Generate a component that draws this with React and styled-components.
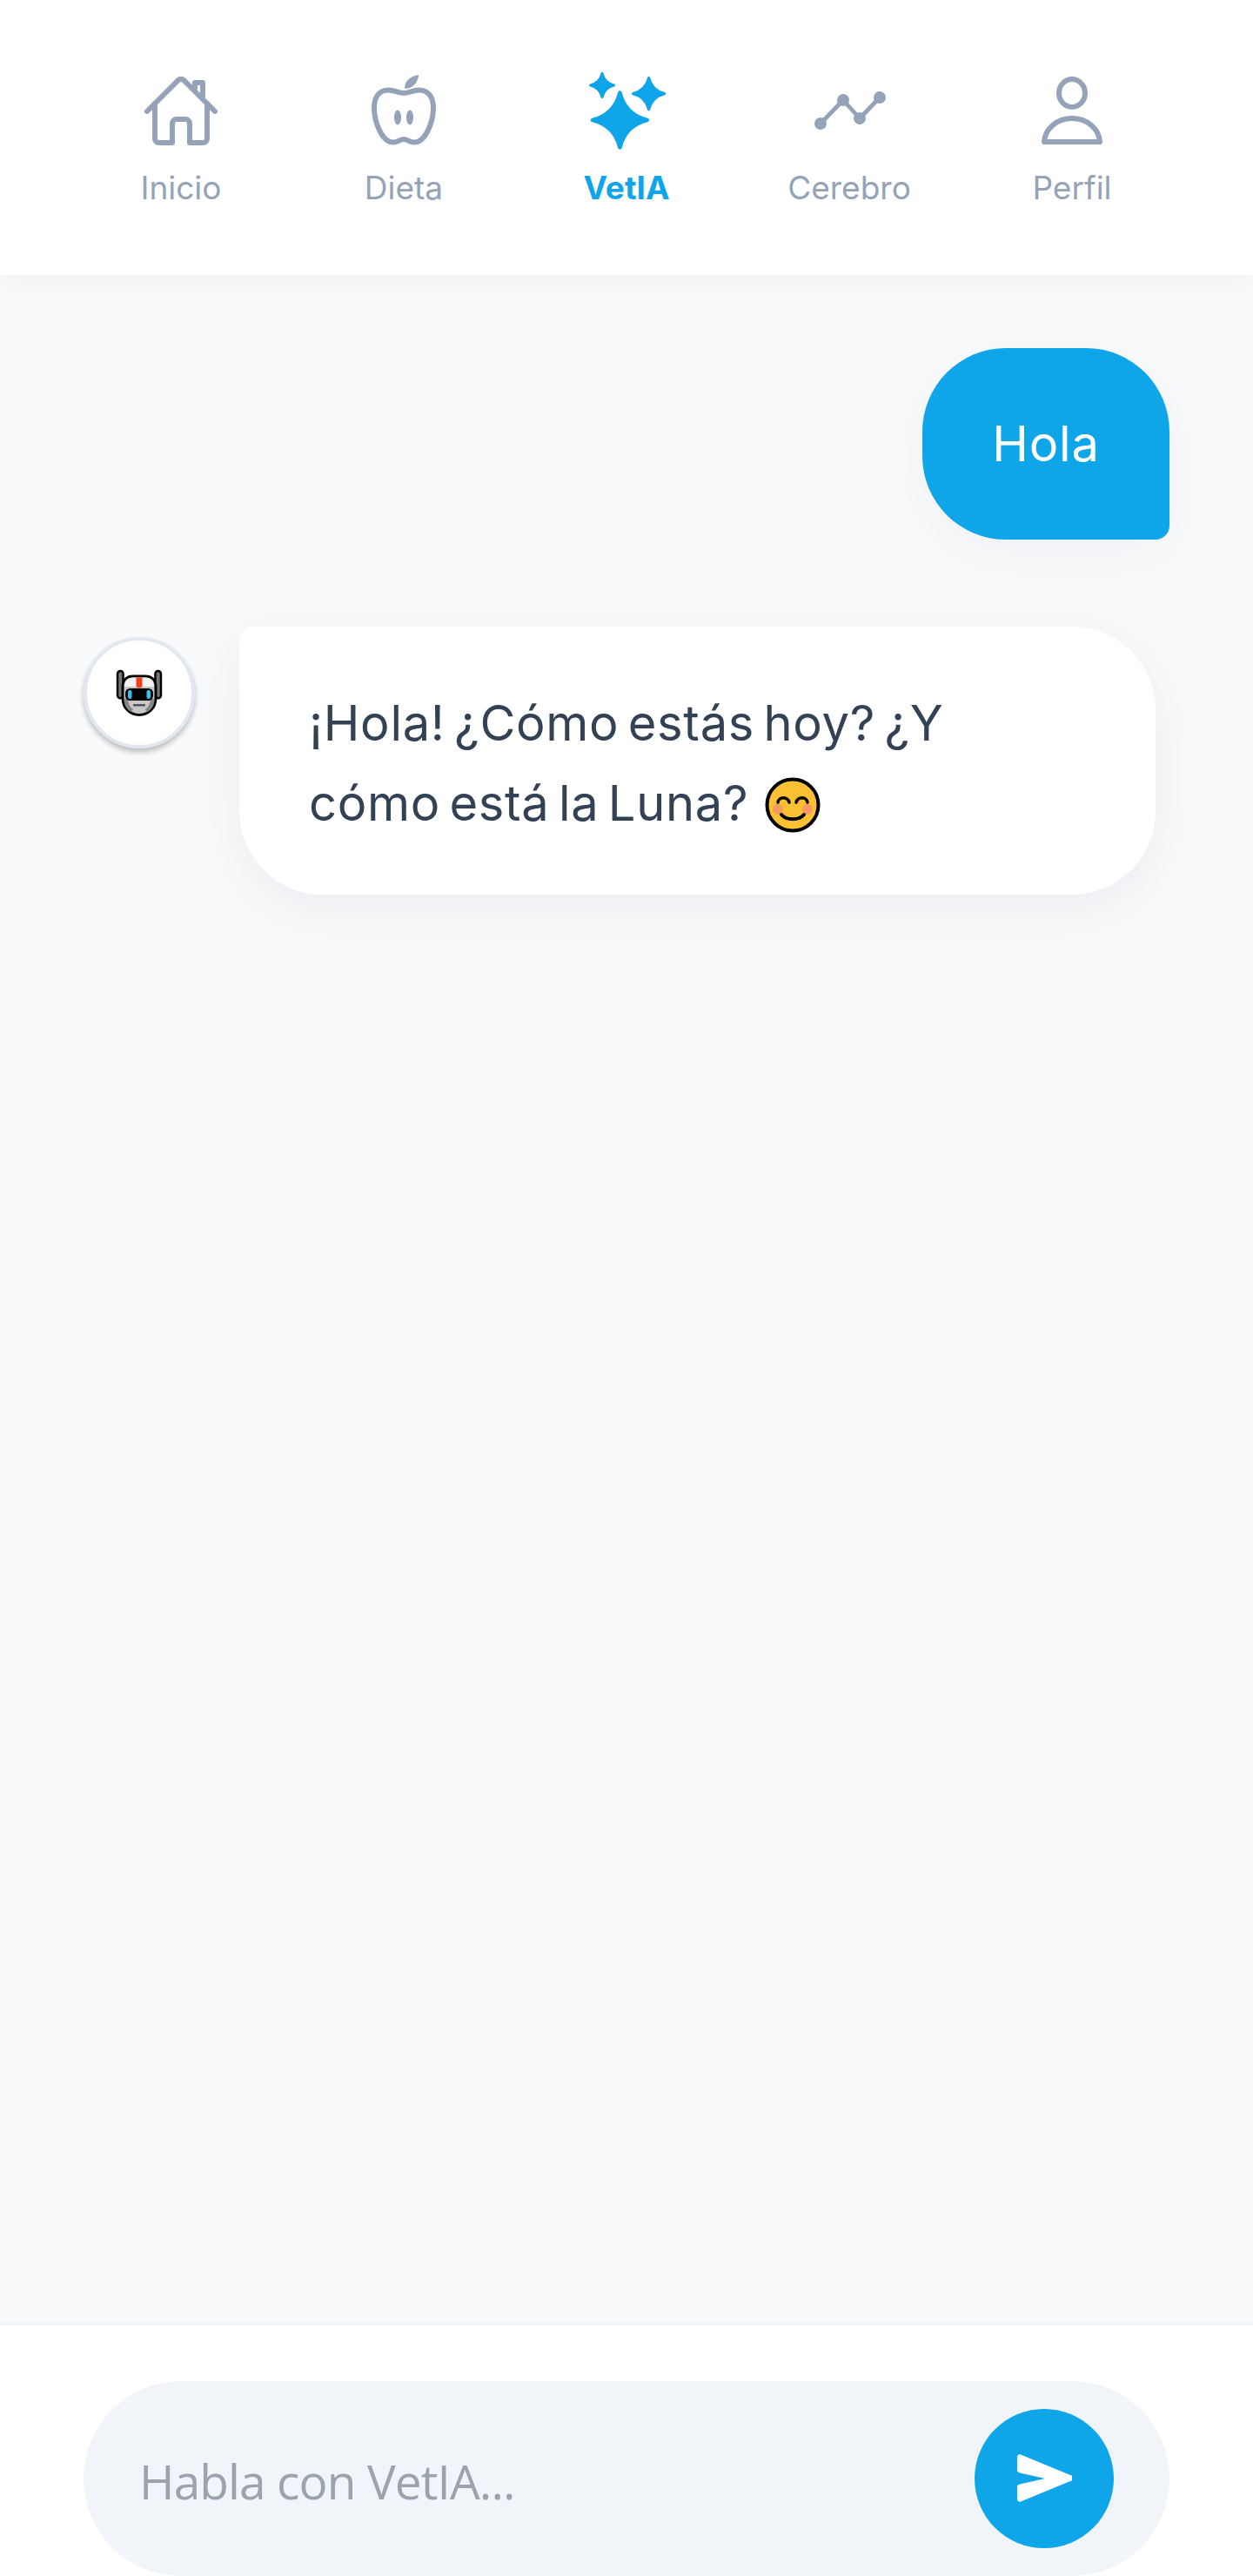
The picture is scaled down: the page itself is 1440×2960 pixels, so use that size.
import React from "react";
import styled, { createGlobalStyle } from "styled-components";

const GlobalStyle = createGlobalStyle`
  html, body {
    margin: 0;
    padding: 0;
    background: #f8fafc;
  }
  * {
    box-sizing: border-box;
  }
`;

const tabs = [
  { label: "Inicio", icon: <HomeIcon /> },
  { label: "Dieta", icon: <AppleIcon /> },
  { label: "VetIA", icon: <SparklesIcon />, active: true },
  { label: "Cerebro", icon: <TrendIcon /> },
  { label: "Perfil", icon: <UserIcon /> },
];

// four point star, the round tips come from the stroke
const star = (x, y, r) => {
  const c = r * 0.2;
  return `M${x} ${y - r}Q${x + c} ${y - c} ${x + r} ${y}Q${x + c} ${y + c} ${x} ${y + r}Q${x - c} ${y + c} ${x - r} ${y}Q${x - c} ${y - c} ${x} ${y - r}z`;
};

function HomeIcon() {
  return (
    <Glyph viewBox="0 0 24 24">
      <path d="M2.25 12l8.95-8.95a1.12 1.12 0 0 1 1.6 0L21.75 12" />
      <path d="M4.5 9.75v10.13c0 .62.5 1.12 1.13 1.12H9.5v-5.500c0-.8.5-1.250 1.250-1.250h2.500c.75 0 1.250.45 1.250 1.250V21h3.870c.63 0 1.130-.5 1.130-1.120V9.750" />
      <path d="M16 5.250V3.750h2.250V7.500" />
    </Glyph>
  );
}

function AppleIcon() {
  return (
    <Glyph viewBox="0 0 24 24">
      <path d="M12 6.750c-1.500 0-2.600-.9-4.400-.9C5 5.850 3.500 7.800 3.500 11c0 3.500 2 9.900 5.500 9.900 1.300 0 2-.9 3-.9s1.700.9 3 .9c3.500 0 5.500-6.400 5.500-9.900 0-3.200-1.500-5.150-4.100-5.150-1.800 0-2.900.9-4.400.9z" />
      <Solid as="ellipse" cx="10.250" cy="13.750" rx="1" ry="2.100" />
      <Solid as="ellipse" cx="13.750" cy="13.750" rx="1" ry="2.100" />
      <Solid d="M12.300 5.500c-.1-2.200 1.500-3.600 4-4-.3 2.400-1.700 3.900-4 4z" />
    </Glyph>
  );
}

function SparklesIcon() {
  return (
    <Sparkle viewBox="0 0 24 24">
      <path d={star(10.1, 14.5, 7.8)} strokeWidth="1.200" />
      <path d={star(5, 4.5, 3.350)} strokeWidth="0.800" />
      <path d={star(18.4, 6.9, 4.500)} strokeWidth="0.800" />
    </Sparkle>
  );
}

function TrendIcon() {
  return (
    <TrendGlyph viewBox="0 0 24 24">
      <path d="M3.750 15.500l6.500-6.750L15 14l5.750-6" />
      <circle cx="3.750" cy="15.500" r="1.150" />
      <circle cx="10.250" cy="8.750" r="1.150" />
      <circle cx="15" cy="14" r="1.150" />
      <circle cx="20.750" cy="8" r="1.150" />
    </TrendGlyph>
  );
}

function UserIcon() {
  return (
    <Glyph viewBox="0 0 24 24">
      <ellipse cx="12" cy="6.750" rx="3.750" ry="4" />
      <path d="M4 20.750C4.300 16.800 7.800 14 12 14s7.700 2.800 8 6.750H4z" />
    </Glyph>
  );
}

function RobotFace() {
  return (
    <svg width="54" height="54" viewBox="0 0 54 54">
      <path d="M5.300 5.300V30M48.700 5.300V30" stroke="#000" strokeWidth="9" strokeLinecap="round" />
      <path d="M5.300 5.300V30M48.700 5.300V30" stroke="#777" strokeWidth="4" strokeLinecap="round" />
      <path d="M8 20C8 12 13 8 20 8h14c7 0 12 4 12 12v13c0 12-9 19.500-19 19.500S8 45 8 33z" fill="#c6c6c6" stroke="#000" strokeWidth="3" />
      <path d="M10 20c0-6 4-10.500 10-10.500h14c6 0 10 4.500 10 10.500z" fill="#f2f2f2" />
      <path d="M9.500 34c0 8 4 13 8 15l3-3c-4-2-6-6-6.500-12zM44.500 34c0 8-4 13-8 15l-3-3c4-2 6-6 6.500-12z" fill="#858585" />
      <path d="M23.500 9.500h7V18a3.500 3.500 0 0 1-7 0z" fill="#f1411f" />
      <rect x="11" y="22" width="32" height="14" rx="5.500" fill="#000" />
      <rect x="14" y="24" width="4.500" height="10" rx="2.250" fill="#2cc3f5" />
      <rect x="35.500" y="24" width="4.500" height="10" rx="2.250" fill="#2cc3f5" />
      <rect x="20" y="40" width="14" height="2.500" fill="#555" />
    </svg>
  );
}

function SmileEmoji() {
  return (
    <EmojiSvg width="64" height="64" viewBox="0 0 64 64">
      <circle cx="32" cy="32" r="29.500" fill="#fcc133" stroke="#000" strokeWidth="4" />
      <circle cx="15" cy="37" r="6" fill="#f79a62" />
      <circle cx="49" cy="37" r="6" fill="#f79a62" />
      <path d="M15 29c1-7 11-7 13 0M36 29c2-7 12-7 13 0" fill="none" stroke="#000" strokeWidth="3.500" strokeLinecap="round" />
      <path d="M19 43c6 7 20 7 26 0" fill="none" stroke="#000" strokeWidth="4" strokeLinecap="round" />
    </EmojiSvg>
  );
}

function App() {
  return (
    <>
      <GlobalStyle />
      <Screen>
        <Header>
          {tabs.map((tab) => (
            <Tab key={tab.label}>
              {tab.icon}
              <TabLabel $active={tab.active}>{tab.label}</TabLabel>
            </Tab>
          ))}
        </Header>
        <Chat>
          <UserBubble>Hola</UserBubble>
          <BotRow>
            <Avatar>
              <RobotFace />
            </Avatar>
            <BotBubble>
              ¡Hola! ¿Cómo estás hoy? ¿Y cómo está la Luna? <SmileEmoji />
            </BotBubble>
          </BotRow>
        </Chat>
        <Composer>
          <InputPill>
            <Placeholder>Habla con VetIA...</Placeholder>
            <SendButton aria-label="Enviar">
              <svg width="64" height="56" viewBox="0 0 64 56">
                <path d="M5 0.500 62 24a3.500 3.500 0 0 1 0 7L5 54.500c-2 .6-4-.6-4-3V38c0-2 1-3 3-3.400L33 28 4 21.400C2 21 1 20 1 18V3.500c0-2.500 2-3.700 4-3z" fill="#fff" />
              </svg>
            </SendButton>
          </InputPill>
        </Composer>
      </Screen>
    </>
  );
}

export default App;

const Screen = styled.div`
  width: 1440px;
  height: 2960px;
  display: flex;
  flex-direction: column;
  overflow: hidden;
  background: #f8fafc;
  font-family: "Inter", "Liberation Sans", sans-serif;
`;

const Header = styled.header`
  height: 316px;
  flex-shrink: 0;
  padding: 80px 80px 0;
  display: grid;
  grid-template-columns: repeat(5, 256px);
  align-items: start;
  background: #fff;
  box-shadow: 0 4px 32px rgba(15, 23, 42, 0.05);
  position: relative;
`;

const Tab = styled.div`
  display: flex;
  flex-direction: column;
  align-items: center;
`;

const Glyph = styled.svg`
  width: 96px;
  height: 96px;
  fill: none;
  stroke: #94a3b8;
  stroke-width: 1.5;
  stroke-linecap: round;
  stroke-linejoin: round;
`;

const TrendGlyph = styled(Glyph)`
  stroke-width: 1.2;
`;

const Sparkle = styled.svg`
  width: 96px;
  height: 96px;
  fill: #0ea5e9;
  stroke: #0ea5e9;
  stroke-linejoin: round;
`;

const Solid = styled.path`
  fill: #94a3b8;
  stroke: none;
`;

const TabLabel = styled.span`
  margin-top: 16px;
  font-size: 37px;
  line-height: 48px;
  color: ${(p) => (p.$active ? "#0ea5e9" : "#94a3b8")};
  font-weight: ${(p) => (p.$active ? 700 : 400)};
`;

const Chat = styled.main`
  flex: 1;
  padding: 84px 96px 0;
  display: flex;
  flex-direction: column;
`;

const UserBubble = styled.div`
  align-self: flex-end;
  width: 284px;
  height: 220px;
  display: flex;
  align-items: center;
  justify-content: center;
  border-radius: 96px 96px 16px 96px;
  background: #0ea5e9;
  color: #fff;
  font-size: 56px;
  letter-spacing: 0.8px;
  box-shadow: 0 16px 64px rgba(15, 23, 42, 0.04);
`;

const BotRow = styled.div`
  margin-top: 100px;
  display: flex;
  align-items: flex-start;
  gap: 51px;
`;

const Avatar = styled.div`
  width: 128px;
  height: 128px;
  margin-top: 12px;
  flex-shrink: 0;
  display: flex;
  align-items: center;
  justify-content: center;
  border-radius: 50%;
  background: #fff;
  border: 4px solid #e2e8f0;
  box-shadow: 0 4px 6px rgba(0, 0, 0, 0.25);
`;

const BotBubble = styled.div`
  width: 1053px;
  height: 308px;
  padding: 65px 200px 0 80px;
  border-radius: 16px 96px 96px 96px;
  background: #fff;
  color: #334155;
  font-size: 56px;
  line-height: 92px;
  letter-spacing: 0.7px;
  word-spacing: -6px;
  box-shadow: 0 16px 64px rgba(15, 23, 42, 0.06);
`;

const EmojiSvg = styled.svg`
  margin-left: 8px;
  vertical-align: -14px;
`;

const Composer = styled.footer`
  height: 292px;
  flex-shrink: 0;
  padding: 64px 96px 0;
  background: #fff;
  border-top: 4px solid #f1f5f9;
`;

const InputPill = styled.div`
  height: 224px;
  padding: 0 64px;
  display: flex;
  align-items: center;
  justify-content: space-between;
  border-radius: 112px;
  background: #f1f5f9;
`;

const Placeholder = styled.span`
  padding-top: 4px;
  color: #9ca3af;
  font-family: "Open Sans", sans-serif;
  font-size: 55px;
  letter-spacing: -0.9px;
`;

const SendButton = styled.button`
  width: 160px;
  height: 160px;
  padding: 0;
  display: flex;
  align-items: center;
  justify-content: center;
  border: none;
  border-radius: 50%;
  background: #0ea5e9;
`;
